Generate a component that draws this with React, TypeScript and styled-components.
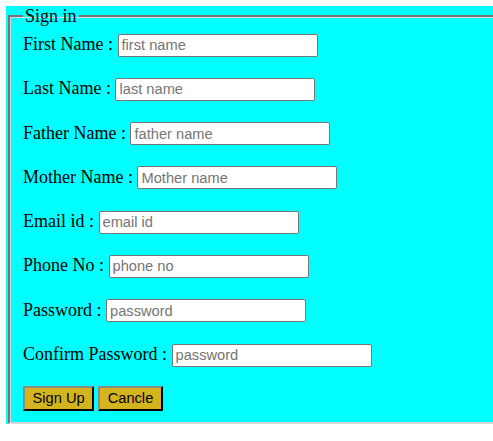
import React from "react";
import styled, { createGlobalStyle } from "styled-components";

const Global = createGlobalStyle`
  html, body { margin: 0; padding: 0; overflow: hidden; background: #ffffff; }
  #root { padding: 6px 0 0 6px; overflow: hidden; }
`;

const Form = styled.form`
  width: 520px;
  background: #00ffff;
  font-family: "Liberation Serif", "Times New Roman", serif;
  font-size: 18px;
  color: #000;
`;

const Fieldset = styled.fieldset`
  margin: 0 2px;
  padding: 7px 13px 11px 13px;
  border: 2px solid;
  border-color: #767676 #d8d8d8 #d8d8d8 #767676;
  box-shadow: inset 1px 1px 0 #d8d8d8;
  min-width: 0;
`;

const Legend = styled.legend`
  padding: 0 2px;
  line-height: 20px;
  font-size: 18px;
`;

const Rows = styled.div`
  display: grid;
  row-gap: 21.3px;
`;

const Row = styled.div`
  display: flex;
  align-items: baseline;
  gap: 4.5px;
  height: 23px;
  white-space: nowrap;
`;

const Label = styled.label`
  line-height: 23px;
`;

const Input = styled.input`
  box-sizing: border-box;
  width: 200px;
  height: 23px;
  margin: 0;
  padding: 1px 3px;
  border: 1px solid #767676;
  border-radius: 2px;
  background: #fff;
  font-family: "Liberation Sans", Arial, sans-serif;
  font-size: 14.67px;
  color: #000;
  &::placeholder { color: #757575; }
`;

const ButtonRow = styled.div`
  display: flex;
  gap: 4px;
  margin-top: -1px;
`;

const Button = styled.button`
  box-sizing: border-box;
  height: 25px;
  margin: 0;
  padding: 0 7.5px;
  border: 2px solid;
  border-color: #8a8a8a #000 #000 #8a8a8a;
  background: #d4b41e;
  font-family: "Liberation Sans", Arial, sans-serif;
  font-size: 14.67px;
  color: #000;
  line-height: 21px;
`;

const fields = [
  { label: "First Name :", placeholder: "first name", type: "text" },
  { label: "Last Name :", placeholder: "last name", type: "text" },
  { label: "Father Name :", placeholder: "father name", type: "text" },
  { label: "Mother Name :", placeholder: "Mother name", type: "text" },
  { label: "Email id :", placeholder: "email id", type: "email" },
  { label: "Phone No :", placeholder: "phone no", type: "text" },
  { label: "Password :", placeholder: "password", type: "password" },
  { label: "Confirm Password :", placeholder: "password", type: "password" },
];

export default function App() {
  return (
    <>
      <Global />
      <Form onSubmit={(e) => e.preventDefault()}>
        <Fieldset>
          <Legend>Sign in</Legend>
          <Rows>
            {fields.map((f) => (
              <Row key={f.label}>
                <Label>{f.label}</Label>
                <Input type={f.type} placeholder={f.placeholder} />
              </Row>
            ))}
            <ButtonRow>
              <Button type="submit">Sign Up</Button>
              <Button type="button">Cancle</Button>
            </ButtonRow>
          </Rows>
        </Fieldset>
      </Form>
    </>
  );
}
